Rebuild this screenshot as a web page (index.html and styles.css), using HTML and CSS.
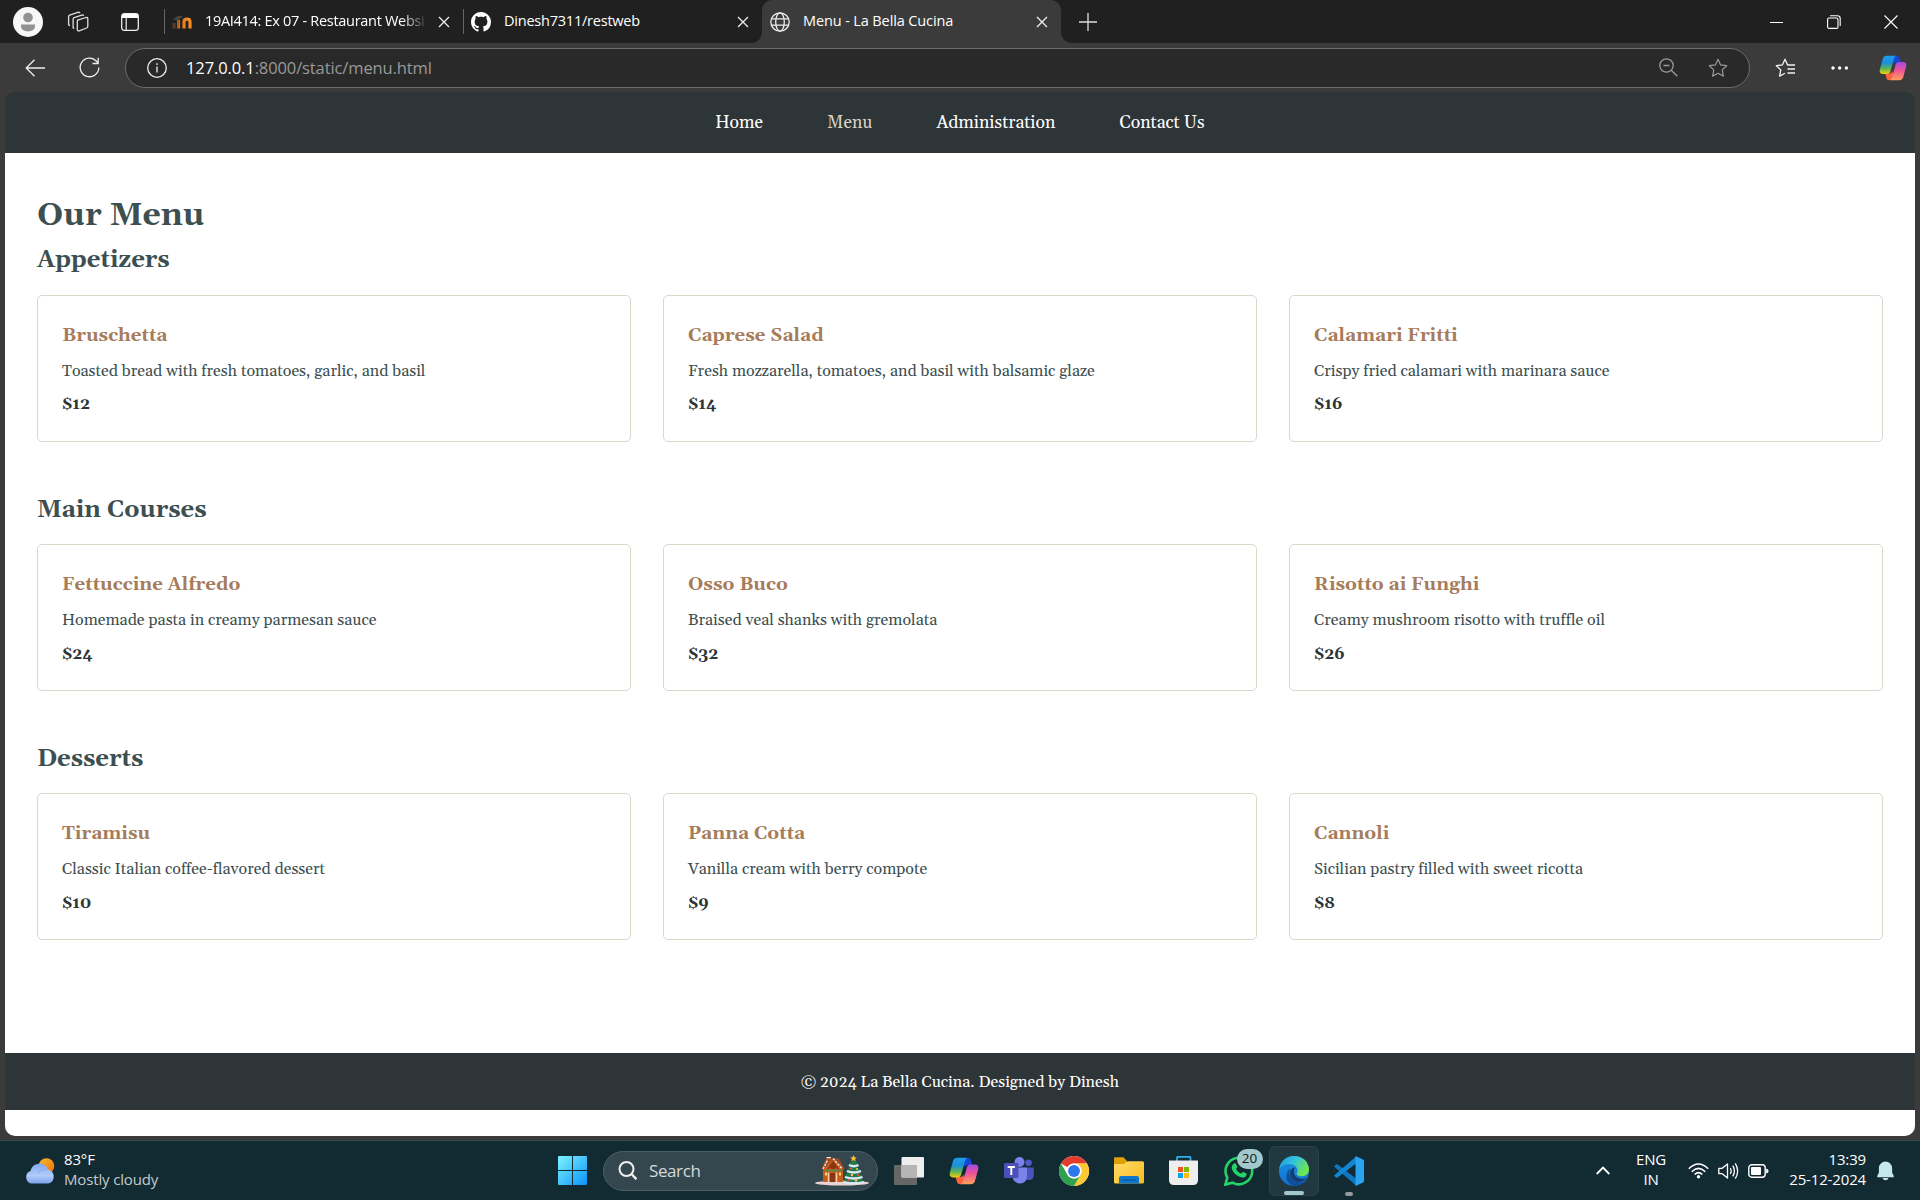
FILE: index.html
```html
<!DOCTYPE html>
<html lang="en">
<head>
<meta charset="utf-8">
<title>Menu - La Bella Cucina</title>
<link rel="stylesheet" href="styles.css">
</head>
<body>
<svg class="defs" width="0" height="0" aria-hidden="true">
  <defs>
    <linearGradient id="cpA" x1="0" y1="0" x2="0" y2="1"><stop offset="0" stop-color="#1f9df0"/><stop offset=".4" stop-color="#1c90d8"/><stop offset=".7" stop-color="#5cb554"/><stop offset="1" stop-color="#f5cf0a"/></linearGradient>
    <linearGradient id="cpB" x1="0" y1="0" x2="0" y2="1"><stop offset="0" stop-color="#a04be8"/><stop offset=".45" stop-color="#ee5298"/><stop offset="1" stop-color="#ffa25e"/></linearGradient>
    <linearGradient id="win" x1="0" y1="0" x2="1" y2="1"><stop offset="0" stop-color="#7df4ff"/><stop offset="1" stop-color="#0a92fb"/></linearGradient>
    <linearGradient id="fold" x1="0" y1="0" x2="1" y2="1"><stop offset="0" stop-color="#ffdc6a"/><stop offset="1" stop-color="#fabb1e"/></linearGradient>
    <linearGradient id="edgeG" x1="0" y1="0" x2="1" y2=".5"><stop offset="0" stop-color="#1a9be0"/><stop offset=".5" stop-color="#34c1df"/><stop offset="1" stop-color="#6de74a"/></linearGradient>
    <linearGradient id="edgeB" x1="0" y1="0" x2="0" y2="1"><stop offset="0" stop-color="#1b91de"/><stop offset="1" stop-color="#1273d4"/></linearGradient>
    <linearGradient id="sun" x1="0" y1="0" x2="1" y2="1"><stop offset="0" stop-color="#f6bd2c"/><stop offset="1" stop-color="#ef6a0c"/></linearGradient>
    <linearGradient id="cloud" x1="0" y1="0" x2="0" y2="1"><stop offset="0" stop-color="#84a8ee"/><stop offset=".6" stop-color="#b0cbf9"/><stop offset="1" stop-color="#7da3ea"/></linearGradient>
    <linearGradient id="mdl" x1="0" y1="0" x2="1" y2="0"><stop offset="0" stop-color="#4b3a33"/><stop offset=".45" stop-color="#e8791e"/><stop offset="1" stop-color="#f68a24"/></linearGradient>
    <symbol id="copilot" viewBox="0 0 30 28">
      <path d="M14 1h5.500c1.400 0 2 .8 2.400 2.200L23.200 8H19c-2 0-3 1-3.500 3z" fill="#1747d4"/>
      <path d="M16 27h-5.500c-1.500 0-2.200-.8-2.600-2.200L6.700 20H11c2 0 3-1 3.500-3z" fill="#fa6340"/>
      <path d="M8.500 .8H19c-1.700.2-2.500 1.400-3 3.200l-3.800 13.500c-.6 2-1.600 3-3.600 3H4C1.200 20.500.2 18.500.8 15.800L4 4C4.700 1.800 6.200.8 8.500.8z" fill="url(#cpA)"/>
      <path d="M21.500 27.200H11c1.700-.2 2.500-1.400 3-3.200l3.800-13.500c.6-2 1.600-3 3.600-3H26c2.800 0 3.800 2 3.200 4.700L26 24c-.7 2.200-2.200 3.200-4.500 3.200z" fill="url(#cpB)"/>
    </symbol>
    <symbol id="x" viewBox="0 0 12 12"><path d="M1 1l10 10M11 1L1 11" fill="none" stroke="#eee" stroke-width="1.300"/></symbol>
    <symbol id="star" viewBox="0 0 20 20"><path d="M10 1.300l2.600 5.600 6.100.8-4.500 4.200 1.200 6.200L10 15.200l-5.400 2.900 1.200-6.200L1.300 7.700l6.100-.8z" fill="none" stroke="currentColor" stroke-width="1.200" stroke-linejoin="round"/></symbol>
  </defs>
</svg>

<div class="tabstrip">
  <div class="strip-tools">
    <svg class="avatar" width="30" height="30" viewBox="0 0 30 30"><circle cx="15" cy="15" r="15" fill="#f7f7f7"/><circle cx="15" cy="10.500" r="4.800" fill="#929292"/><path d="M8 17.500h14v1.700c0 2.800-3 5.200-7 5.200s-7-2.400-7-5.200z" fill="#929292"/></svg>
    <svg class="spaces" width="22" height="21" viewBox="0 0 22 21" fill="none" stroke="#ddd" stroke-width="1.300" stroke-linejoin="round"><path d="M10.500 9.200L19 6.500q1.800-.4 1.800 1.300v7.500q0 1.200-1.200 1.700l-7.400 2.800q-1.900.5-1.900-1.300v-8q0-.9.800-1.300z"/><path d="M7.300 17.500l-1.200-.6V8.200q0-1.100 1-1.500l8.400-2.900 1.500.7M3 14.600l-1.400-.7V5.600q0-1 1-1.400l9-3 1.500.7"/></svg>
    <svg class="vtabs" width="18" height="18" viewBox="0 0 18 18"><rect x=".7" y=".7" width="16.600" height="16.600" rx="2.500" fill="none" stroke="#eee" stroke-width="1.300"/><path d="M1 5V3Q1 1 3 1h12q2 0 2 2v2z" fill="#fff"/><path d="M5.200 5v12.300" stroke="#eee" stroke-width="1.200"/></svg>
  </div>
  <div class="tab">
    <svg width="20" height="14" viewBox="0 0 20 14"><path d="M0 4.500L7 .5l4 1.200-5 3.300z" fill="#4a4644"/><path d="M1.800 13.500V8M6.500 13.500V5M12 13.500V7q0-2.800 3-2.800t3 2.800v6.500" fill="none" stroke="url(#mdl)" stroke-width="3.200"/></svg>
    <span class="tab-title fade">19AI414: Ex 07 - Restaurant Websi</span>
    <svg class="close" width="12" height="12"><use href="#x"/></svg>
  </div>
  <div class="tab">
    <svg width="20" height="20" viewBox="0 0 16 16"><path fill="#fff" d="M8 0C3.580 0 0 3.580 0 8c0 3.540 2.290 6.530 5.470 7.590.4.070.55-.17.55-.38 0-.19-.01-.82-.01-1.490-2.010.37-2.530-.49-2.690-.94-.09-.23-.48-.94-.82-1.130-.28-.15-.68-.52-.01-.53.63-.01 1.080.58 1.230.82.720 1.210 1.870.87 2.330.66.070-.52.280-.87.510-1.070-1.780-.2-3.640-.89-3.640-3.950 0-.87.310-1.590.82-2.150-.08-.2-.36-1.020.08-2.120 0 0 .67-.21 2.200.82.640-.18 1.320-.27 2-.27s1.360.09 2 .27c1.530-1.040 2.200-.82 2.200-.82.440 1.100.16 1.920.08 2.120.51.560.82 1.270.82 2.150 0 3.070-1.870 3.750-3.650 3.950.290.250.54.730.54 1.480 0 1.070-.01 1.930-.01 2.200 0 .21.150.46.55.38A8.010 8.010 0 0 0 16 8c0-4.420-3.580-8-8-8z"/></svg>
    <span class="tab-title repo">Dinesh7311/restweb</span>
    <svg class="close" width="12" height="12"><use href="#x"/></svg>
  </div>
  <div class="tab active">
    <svg width="20" height="20" viewBox="0 0 20 20" fill="none" stroke="#eee" stroke-width="1.300"><circle cx="10" cy="10" r="9.200"/><ellipse cx="10" cy="10" rx="4.300" ry="9.200"/><path d="M1.500 6.800h17M1.500 13.200h17"/></svg>
    <span class="tab-title">Menu - La Bella Cucina</span>
    <svg class="close" width="12" height="12"><use href="#x"/></svg>
  </div>
  <svg class="newtab" width="18" height="18"><path d="M9 0v18M0 9h18" stroke="#ddd" stroke-width="1.300"/></svg>
  <div class="winctl">
    <svg width="14" height="14"><path d="M0 7.500h13" stroke="#fff"/></svg>
    <svg width="14" height="14" fill="none" stroke="#fff" stroke-width="1.100"><rect x=".6" y="3" width="10.400" height="10.400" rx="1.500"/><path d="M3 .8h7.500q2.700 0 2.700 2.700V11"/></svg>
    <svg width="14" height="14"><path d="M.5.5l13 13M13.500.5l-13 13" stroke="#fff" stroke-width="1.100"/></svg>
  </div>
</div>

<div class="toolbar">
  <svg class="back" width="20" height="18" fill="none" stroke="#eee" stroke-width="1.300"><path d="M9.500.8L1.200 9l8.300 8.200M1.200 9H20"/></svg>
  <svg class="reload" width="21" height="21" fill="none" stroke="#eee" stroke-width="1.300"><path d="M19.800 10.500A9.300 9.300 0 1 1 17.500 4.300L19 6M19.200.7V6.500h-5.700"/></svg>
  <div class="omnibox">
    <svg width="20" height="20" fill="none" stroke="#eee" stroke-width="1.300"><circle cx="10" cy="10" r="9.300"/><path d="M10 8.500v6M10 5.300v1.600"/></svg>
    <span class="url"><b>127.0.0.1</b>:8000/static/menu.html</span>
    <svg class="zoomout" width="19" height="19" fill="none" stroke="#999" stroke-width="1.300"><circle cx="7.500" cy="7.500" r="6.700"/><path d="M4.500 7.500h6M12.300 12.300l6 6"/></svg>
    <svg class="fav" width="20" height="20"><use href="#star"/></svg>
  </div>
  <svg class="favs" width="21" height="20" viewBox="0 0 21 20" fill="none" stroke="#f2f2f2" stroke-width="1.300" stroke-linejoin="round"><path d="M15 7H12.600L10 1.300 7.400 6.900l-6.100.8 4.500 4.200-1.200 6.200 5.400-2.900M13.500 7H20M12.500 11H20M12.500 15H20"/></svg>
  <svg class="dots" width="18" height="4" fill="#fff"><circle cx="2" cy="2" r="1.700"/><circle cx="8.700" cy="2" r="1.700"/><circle cx="15.400" cy="2" r="1.700"/></svg>
  <svg class="cop" width="28" height="26"><use href="#copilot"/></svg>
</div>

<div class="viewport">
  <nav class="nav"><a>Home</a><a class="current">Menu</a><a>Administration</a><a>Contact Us</a></nav>
  <main class="main">
    <h1>Our Menu</h1>
    <section>
      <h2>Appetizers</h2>
      <div class="grid">
        <article class="card"><h3>Bruschetta</h3><p>Toasted bread with fresh tomatoes, garlic, and basil</p><p class="price">$12</p></article>
        <article class="card"><h3>Caprese Salad</h3><p>Fresh mozzarella, tomatoes, and basil with balsamic glaze</p><p class="price">$14</p></article>
        <article class="card"><h3>Calamari Fritti</h3><p>Crispy fried calamari with marinara sauce</p><p class="price">$16</p></article>
      </div>
    </section>
    <section>
      <h2>Main Courses</h2>
      <div class="grid">
        <article class="card"><h3>Fettuccine Alfredo</h3><p>Homemade pasta in creamy parmesan sauce</p><p class="price">$24</p></article>
        <article class="card"><h3>Osso Buco</h3><p>Braised veal shanks with gremolata</p><p class="price">$32</p></article>
        <article class="card"><h3>Risotto ai Funghi</h3><p>Creamy mushroom risotto with truffle oil</p><p class="price">$26</p></article>
      </div>
    </section>
    <section>
      <h2>Desserts</h2>
      <div class="grid">
        <article class="card"><h3>Tiramisu</h3><p>Classic Italian coffee-flavored dessert</p><p class="price">$10</p></article>
        <article class="card"><h3>Panna Cotta</h3><p>Vanilla cream with berry compote</p><p class="price">$9</p></article>
        <article class="card"><h3>Cannoli</h3><p>Sicilian pastry filled with sweet ricotta</p><p class="price">$8</p></article>
      </div>
    </section>
  </main>
  <footer class="footer">© 2024 La Bella Cucina. Designed by Dinesh</footer>
</div>

<div class="taskbar">
  <div class="weather">
    <svg width="31" height="26" viewBox="0 0 31 26"><circle cx="21.500" cy="8" r="7.800" fill="url(#sun)"/><path d="M6.500 25.500A6.500 6.500 0 0 1 5.500 13a9 9 0 0 1 17.300-1.500A7.200 7.200 0 0 1 23.500 25.500z" fill="url(#cloud)"/><path d="M13 15a8 8 0 0 1 9.500-3.500" fill="none" stroke="#89abee" stroke-width="1"/></svg>
    <div class="lines"><span>83°F</span><span class="dim">Mostly cloudy</span></div>
  </div>
  <div class="apps">
    <svg class="start" width="29" height="29" viewBox="0 0 29 29"><path d="M1 0H14V14H0V1Q0 0 1 0zM15 0H28Q29 0 29 1V14H15zM0 15H14V29H1Q0 29 0 28zM15 15H29V28Q29 29 28 29H15z" fill="url(#win)"/></svg>
    <div class="search">
      <svg width="19" height="19" fill="none" stroke="#eee" stroke-width="2"><circle cx="8.500" cy="8" r="7"/><path d="M13.500 13l5 5.300" stroke-width="2.400"/></svg>
      <span>Search</span>
      <svg class="holiday" width="54" height="31" viewBox="0 0 54 31">
        <ellipse cx="27" cy="28" rx="27" ry="2.600" fill="#e9d3d4"/>
        <path d="M12 3h3.500v7H12z" fill="#a23a1c"/><path d="M11.500 2h4.500v1.800h-4.500z" fill="#eee"/>
        <path d="M8 14L18 3l10 11v13H8z" fill="#c45c1b"/><path d="M18 6l6 8H12z" fill="#8a3410"/>
        <path d="M7.500 14.500L12 4.500h11l5.500 10" fill="none" stroke="#a24a20" stroke-width="2.600"/><path d="M8 14l5-9.500M18 3.500l9.500 10.500" stroke="#f3ded6" stroke-width="1.500" stroke-dasharray="2.500 1"/>
        <path d="M10 15.500h16" stroke="#4a9152" stroke-width="1.800"/><path d="M14 13.500h2m4 0h2" stroke="#e44131" stroke-width="1.600"/>
        <path d="M15 18h5v9h-5z" fill="#8d3512"/><path d="M13.500 17.500V27M21.500 17.500V27" stroke="#f5cba3" stroke-width="1.600"/><path d="M10 19h2M24 19h2" stroke="#ffd36a" stroke-width="3"/>
        <path d="M38.500 3l6 8h-3l5 6h-2l4 6h-2l2 4H28.500l2-4h-2l4-6h-2l5-6h-3z" fill="#24784a"/>
        <path d="M34 10q5 2.500 9.500 0M32 16q7 3 14 0M30 22q9 3 17.500 0M29 27q10 2.500 20 0" fill="none" stroke="#dce8f7" stroke-width="2.300"/>
        <circle cx="36" cy="13.500" r="1.100" fill="#f55847"/><circle cx="42" cy="14" r="1" fill="#f8ca4c"/><circle cx="37" cy="20" r="1.200" fill="#f8ca4c"/><circle cx="43" cy="20" r="1.200" fill="#ed4750"/><circle cx="34" cy="25" r="1.200" fill="#ed4750"/><circle cx="41" cy="25.500" r="1.200" fill="#f8ca4c"/>
        <path d="M38.500 0l1 2.200 2.300.2-1.800 1.500.6 2.300-2.100-1.200-2.100 1.200.6-2.300-1.800-1.500 2.300-.2z" fill="#ffbf32"/>
      </svg>
    </div>
    <div class="app"><svg width="30" height="28" viewBox="0 0 30 28"><rect y="8" width="23" height="20" rx="1" fill="#666"/><rect x="7.500" y="0" width="22.500" height="20.500" rx="1" fill="#eee"/><path d="M7.500 8H23v12.500H8.500q-1 0-1-1z" fill="#b5b5b5"/></svg></div>
    <div class="app"><svg width="30" height="28"><use href="#copilot"/></svg></div>
    <div class="app"><svg width="30" height="27" viewBox="0 0 30 27"><circle cx="24.500" cy="5.700" r="3.300" fill="#5059c9"/><path d="M18 10.500h11q.8 0 .8 1v6.500c0 3-2 5-5 5s-5-2-5-5z" fill="#4b53bc"/><circle cx="15.500" cy="5" r="5" fill="#7b83eb"/><path d="M9.500 10.500H22q1 0 1 1V19c0 4.500-3 7.500-7 7.500S8.500 23.500 8.500 19v-7.500q0-1 1-1z" fill="#7b83eb"/><rect y="6" width="14.500" height="15" rx="1.300" fill="#4a50b8"/><path d="M3.700 10h7.200M7.300 10v8" stroke="#fff" stroke-width="1.900"/></svg></div>
    <div class="app"><svg width="30" height="30" viewBox="0 0 48 48"><circle cx="24" cy="24" r="24" fill="#fff"/><path d="M24 0a24 24 0 0 1 20.800 12H24a12 12 0 0 0-10.400 6L3.200 12A24 24 0 0 1 24 0z" fill="#e33b2e"/><path d="M44.800 12A24 24 0 0 1 24 48l10.400-18A12 12 0 0 0 34.400 18 12 12 0 0 0 24 12z" fill="#fcc934"/><path d="M24 48A24 24 0 0 1 3.200 12l10.400 18A12 12 0 0 0 34.400 30z" fill="#2fa14e"/><circle cx="24" cy="24" r="12" fill="#fff"/><circle cx="24" cy="24" r="9.500" fill="#2d77ee"/></svg></div>
    <div class="app"><svg width="30" height="27" viewBox="0 0 30 27"><path d="M0 10V1.500Q0 .3 1.200.3H9.500L13 4v6z" fill="#dda106"/><path d="M0 7h9q1.200 0 2-.7L12.500 5q.8-.8 2-.8H28.500q1.500 0 1.500 1.500V25q0 1.500-1.500 1.500H1.500Q0 26.500 0 25z" fill="url(#fold)"/><path d="M5 26.500V21q0-2 2-2H23q2 0 2 2v5.500z" fill="#0f78cc"/><path d="M8.500 23h13" stroke="#09579c" stroke-width="1.300"/></svg></div>
    <div class="app"><svg width="29" height="29" viewBox="0 0 29 29"><path d="M8 5V1.500Q8 .8 8.700.8H20.800q.7 0 .7.700V5" fill="none" stroke="#2bb2ee" stroke-width="1.700"/><path d="M0 4.500H29V24q0 5-5 5H5q-5 0-5-5z" fill="#eee"/><path fill="#f25022" d="M9 11h5v5H9z"/><path fill="#7fba00" d="M15 11h5v5h-5z"/><path fill="#00a4ef" d="M9 17h5v5H9z"/><path fill="#ffb900" d="M15 17h5v5h-5z"/></svg></div>
    <div class="app"><svg width="30" height="30" viewBox="0 0 30 30"><path d="M1.400 28.600l1.900-7A13.300 13.300 0 1 1 8.500 26.700z" fill="none" stroke="#25d366" stroke-width="2.600"/><path d="M10 7.500c.8-.5 1.800-.3 2.100.5l1.100 2.700c.3.700-.9 1.800-1.100 2.300.8 1.900 2.700 3.700 4.900 4.600.6-.3 1.600-1.900 2.300-1.600l2.800 1.300c.8.500.5 1.900-.2 2.900-1.300 1.800-4 1.700-7 .3-3.600-1.700-6.500-4.900-7.100-8.200-.3-2 .8-3.900 2.200-4.800z" fill="#25d366"/></svg><span class="badge">20</span></div>
    <div class="app open"><svg width="30" height="30" viewBox="0 0 30 30"><circle cx="15" cy="15" r="15" fill="url(#edgeB)"/><path d="M.2 13C1.500 5 7.500 0 15 0c8.500 0 15 5.800 15 13.500 0 4-3 6.700-7 6.700-3.600 0-5.800-1.300-5.200-2.700 1.300-1.800 1.200-5-1-7C12 6.500 3.500 7.500.2 13z" fill="url(#edgeG)"/><path d="M11.500 12.500C8.500 18 12 25.500 19 26.300c3.500.4 6.500-.8 9-2.600-3 4.500-8 6.500-13 6.300C8.500 28 6 22 8 17c.7-2 2-3.700 3.500-4.500z" fill="#104f98"/><path d="M16.500 11.500c-2.500 2.500-2.300 8 2 10.200 3.500 1.800 7 1 9.500-.3-2.500 3.500-5.500 4.800-9 4.600-6-.5-9.200-6.500-7.500-11 .8-2.300 3.300-3.800 5-3.500z" fill="#123d6e"/></svg></div>
    <div class="app run"><svg width="30" height="30" viewBox="0 0 30 30"><path d="M0 10.500L2 8.600q.8-.6 1.600 0L24 24v5L21.500 29z" fill="#0b78c4"/><path d="M0 19.500l2 1.900q.8.600 1.600 0L24 6V1l-2.500 0z" fill="#1187d3"/><path d="M21.500 0L29 3.500q1 .5 1 1.500v20q0 1-1 1.500L21.500 30z" fill="#2aa4f0"/></svg></div>
  </div>
  <div class="tray">
    <svg class="chev" width="14" height="9" fill="none" stroke="#fff" stroke-width="1.800"><path d="M.7 8L7 1.500 13.300 8"/></svg>
    <div class="lines lang"><span>ENG</span><span>IN</span></div>
    <svg class="wifi" width="21" height="16" viewBox="0 0 21 16" fill="none" stroke="#fff" stroke-width="1.500"><path d="M.8 5.800Q10.500-3.800 20.200 5.800M3.700 8.700Q10.500 2 17.300 8.700M6.600 11.500Q10.500 7.700 14.400 11.500"/><circle cx="10.500" cy="13.800" r="1.700" fill="#fff" stroke="none"/></svg>
    <svg class="spk" width="21" height="18" viewBox="0 0 21 18" fill="none" stroke="#fff" stroke-width="1.300" stroke-linejoin="round"><path d="M.8 6.300v5.400h3.400L9.500 16V2L4.200 6.300zM12.300 6q1.700 3 0 6M14.800 3.700q3.200 5.300 0 10.600M17.300 1.300q4.700 7.700 0 15.400"/></svg>
    <svg class="bat" width="21" height="14" viewBox="0 0 21 14"><rect x=".8" y=".8" width="16.400" height="12.400" rx="3" fill="none" stroke="#fff" stroke-width="1.400"/><rect x="3" y="3" width="10" height="8" rx="1" fill="#fff"/><path d="M18.200 4.500q2.400.5 2.400 2.500t-2.400 2.500z" fill="#fff"/></svg>
    <div class="lines clock"><span>13:39</span><span>25-12-2024</span></div>
    <svg class="bell" width="17" height="20" viewBox="0 0 17 20" fill="#c5e9eb"><path d="M8.500.5a6.600 6.600 0 0 1 6.600 6.600v4.400l1.700 3.500q.3 1.300-1 1.300H1.200q-1.300 0-1-1.300l1.700-3.500V7.100A6.600 6.600 0 0 1 8.500.5zM5.500 17h6q-.8 2.200-3 2.200t-3-2.200z"/></svg>
  </div>
</div>
</body>
</html>
```
FILE: styles.css
```css
* { box-sizing: border-box; margin: 0; padding: 0; }
body {
  width: 1920px;
  height: 1200px;
  overflow: hidden;
  display: flex;
  flex-direction: column;
  background: #3b3b3b;
  font-family: "Open Sans", "Noto Sans", sans-serif;
  color: #fff;
}
svg { display: block; flex: none; }
.defs { position: absolute; }

/* Tab strip */
.tabstrip { height: 43px; flex: none; display: flex; align-items: center; background: #202020; }
.strip-tools { width: 164px; display: flex; align-items: center; padding-left: 13px; }
.spaces { margin-left: 24px; }
.vtabs { margin-left: 32px; }
.tab {
  width: 299px;
  height: 43px;
  display: flex;
  align-items: center;
  padding: 0 13px 0 8px;
  background: linear-gradient(#666, #666) 0 9px / 1px 25px no-repeat;
}
.tab-title { flex: 1; margin: 0 10px 2px 13px; font-size: 14.500px; letter-spacing: -.12px; white-space: nowrap; }
.tab-title.repo { letter-spacing: -.22px; }
.tab-title.fade { letter-spacing: -.3px; mask-image: linear-gradient(90deg, #000 88%, transparent); }
.tab.active { position: relative; background: #3b3b3b; border-radius: 10px 10px 0 0; }
.tab.active::before, .tab.active::after { content: ""; position: absolute; bottom: 0; width: 10px; height: 10px; }
.tab.active::before { left: -10px; background: radial-gradient(circle at 0 0, #202020 9.500px, #3b3b3b 10px); }
.tab.active::after { right: -10px; background: radial-gradient(circle at 100% 0, #202020 9.500px, #3b3b3b 10px); }
.newtab { margin-left: 18px; }
.winctl { margin-left: auto; padding-right: 22px; display: flex; gap: 43px; }

/* Address bar */
.toolbar { height: 49px; flex: none; display: flex; align-items: center; padding: 0 13px 0 25px; }
.reload { margin-left: 34px; }
.omnibox {
  width: 1625px;
  height: 40px;
  margin-left: 25px;
  display: flex;
  align-items: center;
  padding: 0 21px 0 21px;
  background: #292929;
  border: 1px solid #6b6b6b;
  border-radius: 20px;
}
.url { flex: 1; margin-left: 19px; font-size: 16.500px; letter-spacing: -.11px; color: #999; }
.url b { font-weight: 400; color: #fff; }
.fav { margin-left: 30px; color: #999; }
.favs { margin-left: 25px; }
.dots { margin-left: 35px; }
.cop { margin-left: auto; }

/* Restaurant page */
.viewport {
  height: 1044px;
  flex: none;
  margin: 0 5px;
  display: flex;
  flex-direction: column;
  overflow: hidden;
  background: linear-gradient(#2d3538 60px, #fff 60px);
  border-radius: 10px;
  font: 16px/1.6 Gelasio, Georgia, "Liberation Serif", serif;
  font-variant-ligatures: none;
  color: #3d4f51;
}
.nav {
  height: 61px;
  flex: none;
  display: flex;
  justify-content: center;
  align-items: center;
  gap: 64px;
  padding-top: 1px;
  background: #2d3538;
  color: #fff;
  font-size: 17.600px;
}
.nav .current { color: #d8d3c3; }
.main { height: 900px; flex: none; padding: 37px 32px 0; }
h1 { font-size: 32px; }
h2 { font-size: 24px; margin-bottom: 15px; }
section { margin-bottom: 49px; }
.grid { display: grid; grid-template-columns: repeat(3, 1fr); gap: 32px; }
.card { height: 147px; padding: 25px 24px 0; border: 1px solid #d9d8ca; border-radius: 5px; }
.card h3 { font-size: 18.720px; margin-bottom: 8px; color: #a67c5b; }
.card .price { margin-top: 8px; font-weight: 700; color: #2d3538; }
.footer { height: 57px; flex: none; background: #2d3538; color: #fff; text-align: center; line-height: 59px; }

/* Taskbar */
.taskbar {
  height: 60px;
  margin-top: auto;
  flex: none;
  display: grid;
  grid-template-columns: 545px 1fr 380px;
  align-items: center;
  background: #122a32;
  border-top: 1px solid #39484d;
}
.lines { display: flex; flex-direction: column; padding-bottom: 4px; font-size: 15px; line-height: 20px; letter-spacing: -.15px; }
.weather { display: flex; align-items: center; gap: 8px; padding-left: 25px; }
.dim { color: #c3cbce; }
.apps { display: flex; align-items: center; padding-left: 13px; }
.search {
  width: 275px;
  height: 40px;
  margin: 0 3px 0 16px;
  display: flex;
  align-items: center;
  padding: 0 8px 0 14px;
  background: #34474f;
  border: 1px solid #4d5e65;
  border-radius: 20px;
  color: #d5dadc;
  font-size: 17px;
  letter-spacing: -.4px;
}
.search span { margin: 0 auto 1px 12px; }
.app { position: relative; width: 50px; height: 50px; margin: 0 2.500px; display: grid; place-items: center; }
.app.open { background: #223840; border: 1px solid #2c4047; border-radius: 6px; }
.app.open::after, .app.run::after { content: ""; position: absolute; bottom: 0; left: 50%; width: 20px; height: 4px; margin-left: -10px; border-radius: 2px; background: #a3c8cc; }
.app.run::after { width: 8px; margin-left: -4px; background: #959b9e; }
.badge {
  position: absolute;
  left: 23px;
  top: 3px;
  width: 26px;
  height: 20px;
  border-radius: 10px;
  background: #a3c8cc;
  color: #10191c;
  font-size: 13.500px;
  line-height: 19px;
  text-align: center;
}
.tray { display: flex; align-items: center; padding-left: 56px; }
.lang { width: 50px; margin-left: 16px; text-align: center; }
.wifi { margin-left: 12px; }
.spk { margin-left: 9px; }
.bat { margin-left: 9px; }
.clock { margin-left: auto; text-align: right; }
.bell { margin: 0 26px 0 11px; }
```
